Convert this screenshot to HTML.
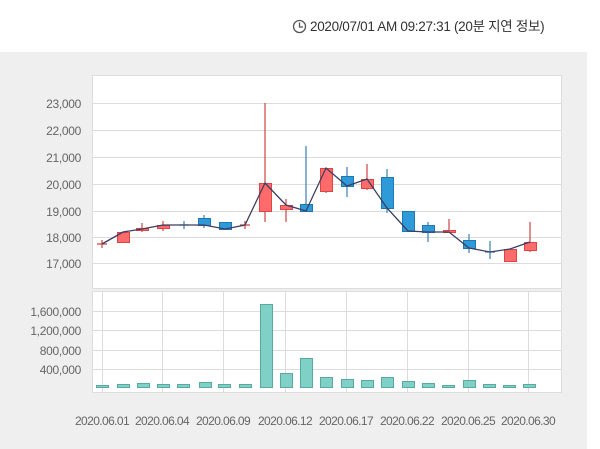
<!DOCTYPE html>
<html><head><meta charset="utf-8"><style>
body{margin:0;width:600px;height:449px;background:#fff;overflow:hidden;font-family:"Liberation Sans","Noto Sans CJK KR",sans-serif}
</style></head><body>
<svg width="600" height="449" xmlns="http://www.w3.org/2000/svg" style="position:absolute;left:0;top:0">
<rect x="0" y="52" width="587" height="397" fill="#efefef"/>
<circle cx="299.5" cy="26.5" r="6" fill="none" stroke="#555" stroke-width="1.3"/>
<path d="M299.5 22.5V27H303" fill="none" stroke="#555" stroke-width="1.3"/>
<text x="310" y="31" font-size="13.5" fill="#333" letter-spacing="-0.3">2020/07/01 AM 09:27:31 (20분 지연 정보)</text>
<rect x="92.5" y="75.5" width="469" height="213" fill="#fff" stroke="#ddd"/>
<rect x="92.5" y="291.5" width="469" height="101" fill="#fff" stroke="#ddd"/>
<g stroke="#dcdcdc" stroke-width="1">
<path d="M93 103.5H561M93 130.5H561M93 157.5H561M93 184.5H561M93 211.5H561M93 237.5H561M93 263.5H561"/>
<path d="M93 311.5H561M93 330.5H561M93 350.5H561M93 369.5H561"/>
<path d="M102.5 292V392M162.5 292V392M223.5 292V392M285.5 292V392M346.5 292V392M407.5 292V392M468.5 292V392M528.5 292V392"/>
</g>
<g font-size="12" fill="#666" text-anchor="end" letter-spacing="-0.3">
<text x="81" y="108">23,000</text><text x="81" y="135">22,000</text><text x="81" y="162">21,000</text><text x="81" y="189">20,000</text><text x="81" y="216">19,000</text><text x="81" y="242">18,000</text><text x="81" y="268">17,000</text>
<text x="81" y="316">1,600,000</text><text x="81" y="335">1,200,000</text><text x="81" y="355">800,000</text><text x="81" y="374">400,000</text>
</g>
<g font-size="12" fill="#666" text-anchor="middle" letter-spacing="-0.6">
<text x="102" y="425">2020.06.01</text><text x="162" y="425">2020.06.04</text><text x="223" y="425">2020.06.09</text><text x="285" y="425">2020.06.12</text><text x="346" y="425">2020.06.17</text><text x="407" y="425">2020.06.22</text><text x="468" y="425">2020.06.25</text><text x="528" y="425">2020.06.30</text>
</g>
<!-- wicks -->
<g stroke-width="1.2">
<path stroke="#c44" d="M102 240V248M97 244H107M142 223V232M137 229H147M163 221V231M245 221V229M240 225H250M265 103V222M286 199V222M326 191V193M367 164V190M449 219V232M510 261V262M530 222V252"/>
<path stroke="#3a7fb0" d="M184 221V229M179 225H189M204 215V228M306 146V211M347 167V197M387 169V213M428 222V242M469 234V253M490 241V259M485 252H495"/>
</g>
<g stroke="#d44" fill="#ff6b6b">
<rect x="117.5" y="232.5" width="12" height="10"/>
<rect x="157.5" y="225.5" width="12" height="3"/>
<rect x="259.5" y="183.5" width="12" height="28"/>
<rect x="280.5" y="205.5" width="12" height="4"/>
<rect x="320.5" y="168.5" width="12" height="23"/>
<rect x="361.5" y="179.5" width="12" height="9"/>
<rect x="443.5" y="230.5" width="12" height="2"/>
<rect x="504.5" y="249.5" width="12" height="12"/>
<rect x="524.5" y="242.5" width="12" height="8"/>
<rect x="136.5" y="228.5" width="12" height="2"/>
</g>
<g stroke="#1f77b4" fill="#2e9ad8">
<rect x="198.5" y="218.5" width="12" height="7"/>
<rect x="219.5" y="222.5" width="12" height="7"/>
<rect x="300.5" y="204.5" width="12" height="7"/>
<rect x="341.5" y="176.5" width="12" height="10"/>
<rect x="381.5" y="177.5" width="12" height="31"/>
<rect x="402.5" y="211.5" width="12" height="20"/>
<rect x="422.5" y="225.5" width="12" height="7"/>
<rect x="463.5" y="240.5" width="12" height="8"/>
</g>
<polyline fill="none" stroke="#3b3f63" stroke-width="1.3" points="102,244 123,232 142,229 163,225 184,225 204,225 225,229 245,225 265,183 286,205 306,211 326,168 347,186 367,179 387,208 408,231 428,232 449,232 469,248 490,252 510,249 530,242"/>
<g fill="#7fd1c7" stroke="#5aa9a0">
<rect x="96.5" y="385.5" width="12" height="2"/><rect x="117.5" y="384.5" width="12" height="3"/><rect x="137.5" y="383.5" width="12" height="4"/><rect x="157.5" y="384.5" width="12" height="3"/><rect x="177.5" y="384.5" width="12" height="3"/><rect x="199.5" y="382.5" width="12" height="5"/><rect x="218.5" y="384.5" width="12" height="3"/><rect x="239.5" y="384.5" width="12" height="3"/><rect x="260.5" y="304.5" width="12" height="83"/><rect x="280.5" y="373.5" width="12" height="14"/><rect x="300.5" y="358.5" width="12" height="29"/><rect x="320.5" y="377.5" width="12" height="10"/><rect x="341.5" y="379.5" width="12" height="8"/><rect x="361.5" y="380.5" width="12" height="7"/><rect x="381.5" y="377.5" width="12" height="10"/><rect x="402.5" y="381.5" width="12" height="6"/><rect x="422.5" y="383.5" width="12" height="4"/><rect x="442.5" y="385.5" width="12" height="2"/><rect x="463.5" y="380.5" width="12" height="7"/><rect x="483.5" y="384.5" width="12" height="3"/><rect x="503.5" y="385.5" width="12" height="2"/><rect x="523.5" y="384.5" width="12" height="3"/>
</g>
</svg>
</body></html>
